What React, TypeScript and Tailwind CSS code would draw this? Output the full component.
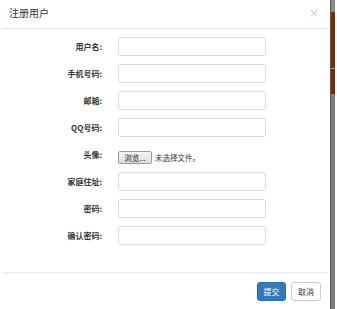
import React from "react";

const font = { fontFamily: '"Noto Sans CJK SC", "Noto Sans", sans-serif' };

const rows: { label: string; type: "input" | "file" }[] = [
  { label: "用户名:", type: "input" },
  { label: "手机号码:", type: "input" },
  { label: "邮箱:", type: "input" },
  { label: "QQ号码:", type: "input" },
  { label: "头像:", type: "file" },
  { label: "家庭住址:", type: "input" },
  { label: "密码:", type: "input" },
  { label: "确认密码:", type: "input" },
];

export default function App() {
  return (
    <div className="w-[337px] h-[309px] bg-white flex overflow-hidden" style={font}>
      <div className="w-[330px] h-[309px] flex flex-col">
        <div className="mx-[2px] h-[29px] border-b border-[#e6e6e6] flex items-center justify-between pl-[7px] pr-[9px] pb-[2px]">
          <span className="text-[10px] leading-none text-[#333]">注册用户</span>
          <span className="text-[10px] leading-none text-[#c4c4c4]">×</span>
        </div>
        <div className="h-[243px] pt-[8px] flex flex-col gap-[8px]">
          {rows.map((r) => (
            <div key={r.label} className="flex items-center h-[19px]">
              <div className="w-[102px] text-right text-[8px] font-bold leading-none text-[#333] pr-[0px]">
                {r.label}
              </div>
              <div className="ml-[16px] flex items-center">
                {r.type === "input" ? (
                  <div className="w-[148px] h-[19px] rounded-[3px] border border-[#dadada] bg-white" />
                ) : (
                  <div className="flex items-center mt-[6px]">
                    <div className="w-[34px] h-[13px] border border-[#9a9a9a] rounded-[2px] bg-gradient-to-b from-[#f6f6f6] to-[#dcdcdc] flex items-center justify-center text-[7.5px] leading-none text-[#222]">
                      浏览...
                    </div>
                    <span className="ml-[3px] text-[7.5px] leading-none text-[#333]">未选择文件。</span>
                  </div>
                )}
              </div>
            </div>
          ))}
        </div>
        <div className="mx-[2px] border-t-2 border-[#f0f0f0] pt-[8px] pr-[7px] flex justify-end gap-[5px]">
          <div className="w-[29px] h-[19px] rounded-[3px] bg-[#337ab7] border border-[#2e6da4] flex items-center justify-center text-[8px] leading-none text-white">
            提交
          </div>
          <div className="w-[30px] h-[19px] rounded-[3px] bg-white border border-[#cccccc] flex items-center justify-center text-[8px] leading-none text-[#333]">
            取消
          </div>
        </div>
      </div>
      <div className="w-[5px] h-[309px] border-l border-[#5a5a5a] flex flex-col">
        <div className="h-[12px] bg-[#8a8a8a]" />
        <div className="h-[56px] bg-[#7a2a06]" />
        <div className="h-[1px] bg-[#9a9a9a]" />
        <div className="h-[25px] bg-[#7a2a06]" />
        <div className="flex-1 bg-[#7d7d7d]" />
      </div>
    </div>
  );
}
